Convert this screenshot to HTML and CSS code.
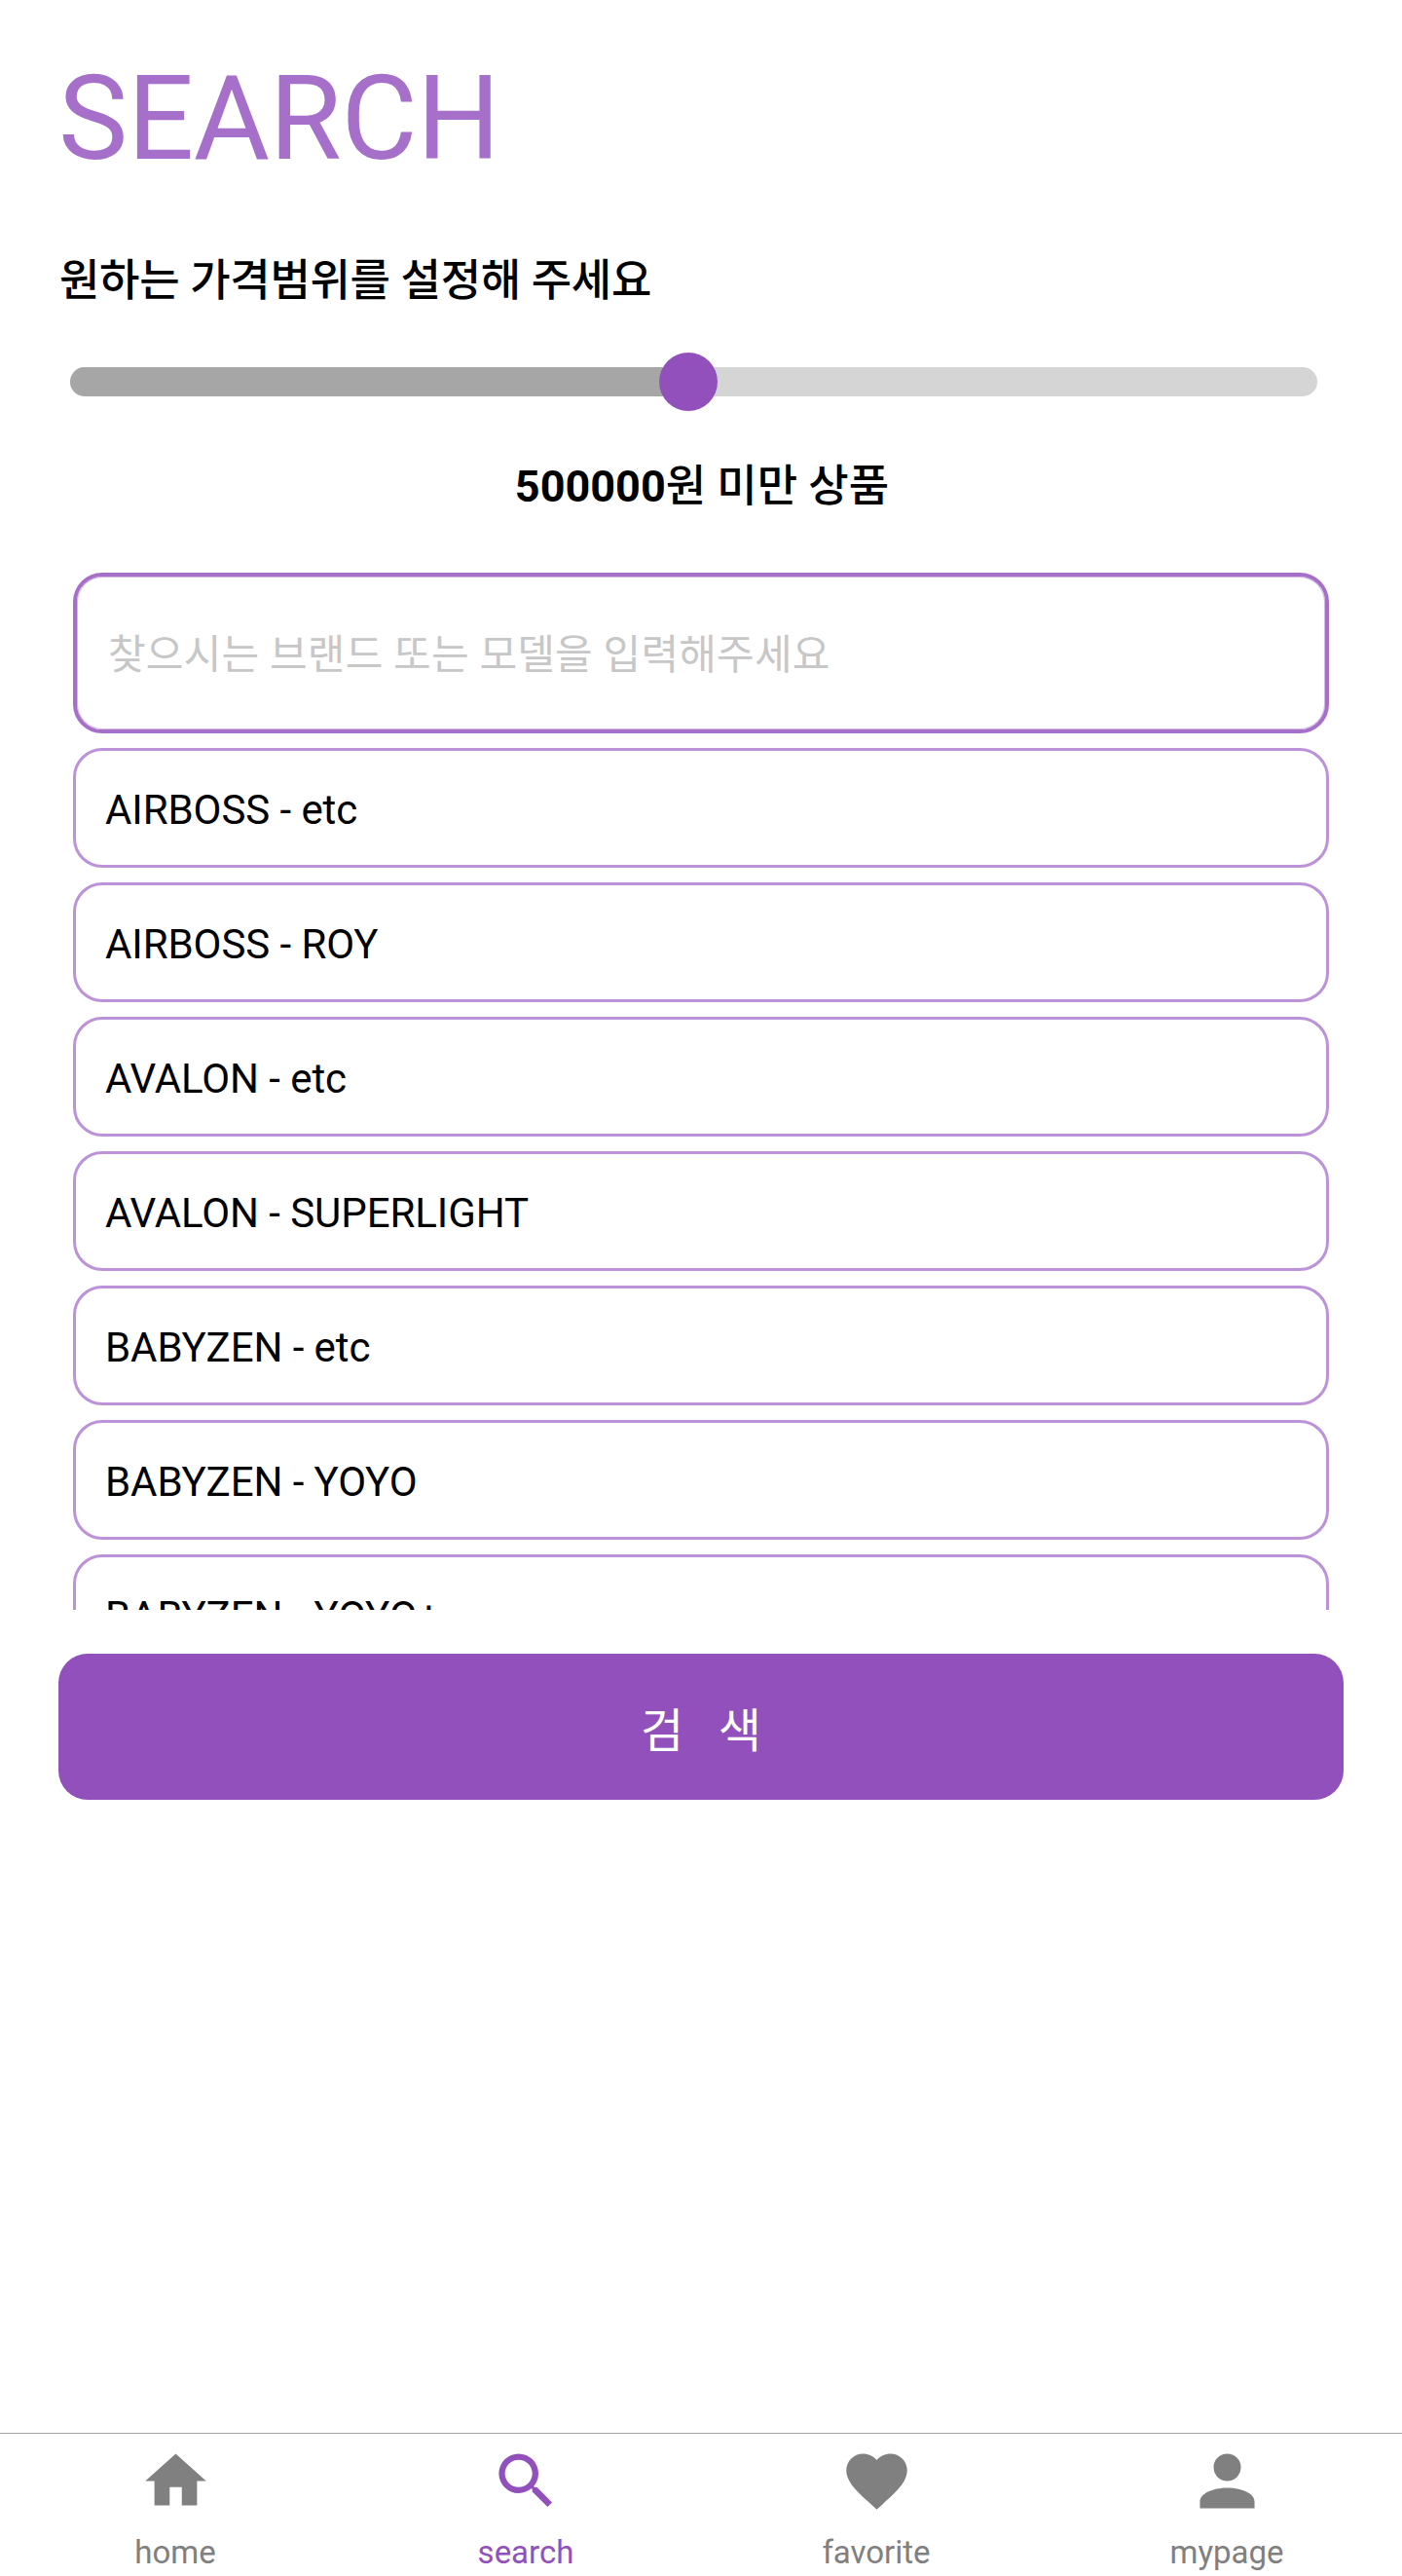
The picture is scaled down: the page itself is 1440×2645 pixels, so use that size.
FILE: index.html
```html
<!DOCTYPE html>
<html lang="ko">
<head>
<meta charset="utf-8">
<title>Search</title>
<link rel="stylesheet" href="styles.css">
</head>
<body>
<main class="screen">
  <h1 class="title">SEARCH</h1>
  <h2 class="prompt">원하는 가격범위를 설정해 주세요</h2>
  <div class="slider"><div class="fill"></div><div class="thumb"></div></div>
  <p class="amount"><b>500000</b>원 미만 상품</p>
  <input class="query" type="text" placeholder="찾으시는 브랜드 또는 모델을 입력해주세요">
  <ul class="models">
    <li>AIRBOSS - etc</li>
    <li>AIRBOSS - ROY</li>
    <li>AVALON - etc</li>
    <li>AVALON - SUPERLIGHT</li>
    <li>BABYZEN - etc</li>
    <li>BABYZEN - YOYO</li>
    <li>BABYZEN - YOYO+</li>
  </ul>
  <button class="submit">검&nbsp;&nbsp; 색</button>
</main>
<nav class="tabs">
  <a class="tab"><svg viewBox="0 0 24 24"><path d="M10 20v-6h4v6h5v-8h3L12 3 2 12h3v8z"/></svg><span>home</span></a>
  <a class="tab active"><svg viewBox="0 0 24 24"><path d="M15.5 14h-.79l-.28-.27A6.471 6.471 0 0 0 16 9.5 6.5 6.5 0 1 0 9.5 16c1.61 0 3.09-.59 4.23-1.57l.27.28v.79l5 4.99L20.49 19l-4.99-5zm-6 0C7.01 14 5 11.99 5 9.5S7.01 5 9.5 5 14 7.01 14 9.5 11.99 14 9.5 14z"/></svg><span>search</span></a>
  <a class="tab"><svg viewBox="0 0 24 24"><path d="M12 21.35l-1.45-1.32C5.4 15.36 2 12.28 2 8.5 2 5.42 4.42 3 7.5 3c1.74 0 3.41.81 4.5 2.09C13.09 3.81 14.76 3 16.5 3 19.58 3 22 5.42 22 8.5c0 3.78-3.4 6.86-8.55 11.54L12 21.35z"/></svg><span>favorite</span></a>
  <a class="tab"><svg viewBox="1.3 1.3 21.4 21.4"><path d="M12 4a4 4 0 1 1 0 8 4 4 0 0 1 0-8m0 10c4.42 0 8 1.79 8 4v2H4v-2c0-2.21 3.58-4 8-4z"/></svg><span>mypage</span></a>
</nav>
</body>
</html>
```
FILE: styles.css
```css
* { box-sizing: border-box; margin: 0; padding: 0; }
body { height: 2645px; display: flex; flex-direction: column; background: #fff; color: #000; font-family: Roboto, "Noto Sans CJK KR", sans-serif; overflow: hidden; }
.screen { flex: 1; display: flex; flex-direction: column; padding: 52px 60px 0; }
.title { height: 140px; line-height: 140px; font-size: 120px; font-weight: 400; letter-spacing: -0.3px; color: #a66fca; }
.prompt { height: 60px; margin-top: 67px; padding-left: 1px; line-height: 60px; font-size: 45px; font-weight: 500; letter-spacing: -0.3px; }
.slider { position: relative; height: 30px; margin: 58px 27px 0 12px; border-radius: 15px; background: #d5d5d5; }
.fill { width: 635px; height: 30px; border-radius: 15px 0 0 15px; background: #a6a6a6; }
.thumb { position: absolute; left: 605px; top: -15px; width: 60px; height: 60px; border-radius: 50%; background: #9150bc; }
.amount { height: 60px; margin-top: 63px; padding-left: 2px; line-height: 60px; font-size: 45px; font-weight: 500; text-align: center; }
.amount b { font-weight: 700; }
.query { height: 165px; margin: 58px 15px 0; padding: 4px 32px 0; border: 4px solid #a66fca; border-radius: 30px; box-shadow: inset 0 0 0 1px #d3b7e5; font: 400 42px Roboto, "Noto Sans CJK KR", sans-serif; letter-spacing: 0.2px; }
.query::placeholder { color: #c7c7c7; opacity: 1; }
.models { height: 900px; padding: 15px 15px 0; display: flex; flex-direction: column; gap: 15px; overflow: hidden; list-style: none; }
.models li { flex: none; height: 123px; padding: 0 30px; border: 3px solid #bc93d8; border-radius: 30px; font-size: 42px; line-height: 122px; letter-spacing: -0.07px; }
.submit { height: 150px; margin-top: 45px; border: 0; border-radius: 30px; background: #9150bc; color: #fff; font: 400 48px Roboto, "Noto Sans CJK KR", sans-serif; white-space: pre; }
.tabs { height: 147px; display: flex; border-top: 1px solid #a0a0a0; }
.tab { flex: 1; display: flex; flex-direction: column; align-items: center; gap: 16px; padding-top: 11px; color: #808080; font-size: 33px; line-height: 40px; }
.tab svg { width: 75px; height: 75px; fill: currentColor; }
.tab.active { color: #9150bc; }
```
